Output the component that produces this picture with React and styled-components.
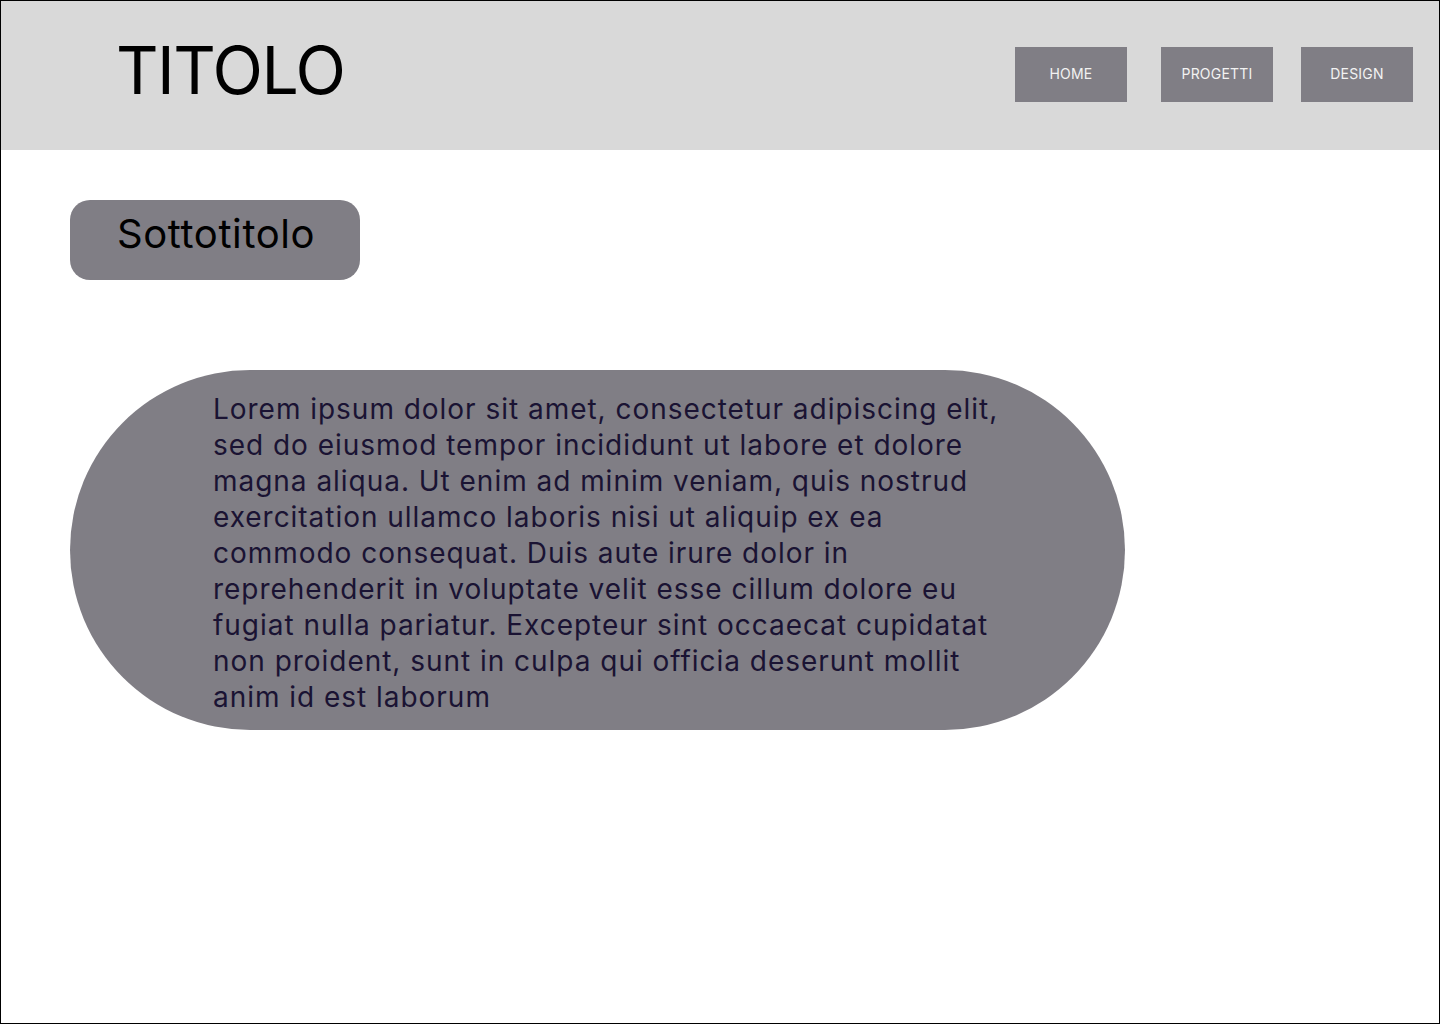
import React from 'react'
import styled, { createGlobalStyle } from 'styled-components'

const GlobalStyle = createGlobalStyle`
    body {
        margin: 0;
        font-family: Inter, "Noto Sans", sans-serif;
        background: #fff;
    }
`

const navItems = ['HOME', 'PROGETTI', 'DESIGN']

const lorem = 'Lorem ipsum dolor sit amet, consectetur adipiscing elit, sed do eiusmod tempor incididunt ut labore et dolore magna aliqua. Ut enim ad minim veniam, quis nostrud exercitation ullamco laboris nisi ut aliquip ex ea commodo consequat. Duis aute irure dolor in reprehenderit in voluptate velit esse cillum dolore eu fugiat nulla pariatur. Excepteur sint occaecat cupidatat non proident, sunt in culpa qui officia deserunt mollit anim id est laborum'

const App = () => {
    return <>
        <GlobalStyle />
        <Frame>
            <Header>
                <Title>TITOLO</Title>
                <Nav>
                    {navItems.map(item => <NavButton key={item}>{item}</NavButton>)}
                </Nav>
            </Header>
            <Main>
                <Subtitle>Sottotitolo</Subtitle>
                <TextPill>
                    <Paragraph>{lorem}</Paragraph>
                </TextPill>
            </Main>
        </Frame>
    </>
}

export default App;

const Frame = styled.div`
    width: 1440px;
    height: 1024px;
    box-sizing: border-box;
    border: 1px solid #000;
    display: flex;
    flex-direction: column;
`

const Header = styled.header`
    height: 149px;
    background: #d9d9d9;
    display: flex;
    align-items: flex-start;
    justify-content: space-between;
    padding: 0 26px 0 115px;
`

const Title = styled.h1`
    margin: 32px 0 0;
    font-size: 66px;
    font-weight: 400;
    line-height: 74px;
    letter-spacing: -1.5px;
    color: #000;
`

const Nav = styled.nav`
    display: flex;
    margin-top: 46px;
`

const NavButton = styled.button`
    width: 112px;
    height: 55px;
    border: none;
    background: #807e85;
    color: #f2f2f2;
    font-family: Inter, sans-serif;
    font-size: 14px;
    letter-spacing: 0.2px;
    padding: 0 0 2px;
    &:nth-child(1) { margin-right: 34px; }
    &:nth-child(2) { margin-right: 28px; }
`

const Main = styled.main`
    display: flex;
    flex-direction: column;
    align-items: flex-start;
    padding: 50px 0 0 69px;
`

const Subtitle = styled.div`
    width: 290px;
    height: 80px;
    box-sizing: border-box;
    border-radius: 20px;
    background: #807e85;
    padding: 10px 0 0 47px;
    font-size: 40px;
    line-height: 48px;
    letter-spacing: 0.6px;
    color: #000;
`

const TextPill = styled.section`
    margin-top: 90px;
    width: 1055px;
    height: 360px;
    border-radius: 180px;
    background: #807e85;
    box-sizing: border-box;
    padding: 6px 0 0 143px;
    display: flex;
    align-items: center;
`

const Paragraph = styled.p`
    margin: 0;
    width: 810px;
    font-size: 28px;
    line-height: 36px;
    letter-spacing: 0.97px;
    color: #1a1333;
`
